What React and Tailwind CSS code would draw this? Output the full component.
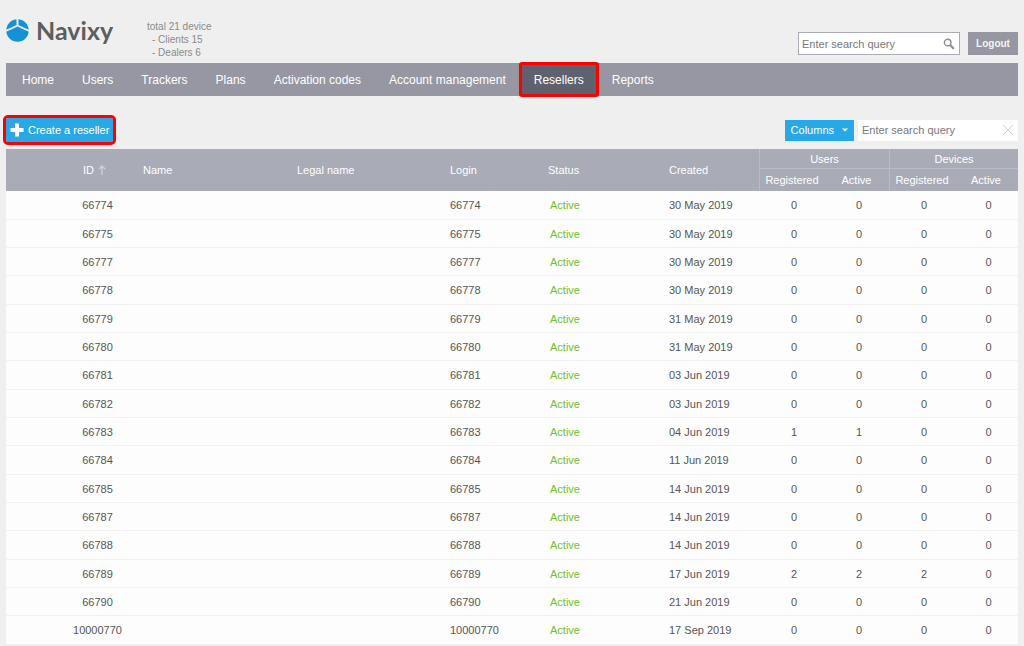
import React, { useState } from 'react';

const NAV = [
  'Home',
  'Users',
  'Trackers',
  'Plans',
  'Activation codes',
  'Account management',
  'Resellers',
  'Reports',
];

const RESELLERS = [
  { id: '66774', created: '30 May 2019', counts: [0, 0, 0, 0] },
  { id: '66775', created: '30 May 2019', counts: [0, 0, 0, 0] },
  { id: '66777', created: '30 May 2019', counts: [0, 0, 0, 0] },
  { id: '66778', created: '30 May 2019', counts: [0, 0, 0, 0] },
  { id: '66779', created: '31 May 2019', counts: [0, 0, 0, 0] },
  { id: '66780', created: '31 May 2019', counts: [0, 0, 0, 0] },
  { id: '66781', created: '03 Jun 2019', counts: [0, 0, 0, 0] },
  { id: '66782', created: '03 Jun 2019', counts: [0, 0, 0, 0] },
  { id: '66783', created: '04 Jun 2019', counts: [1, 1, 0, 0] },
  { id: '66784', created: '11 Jun 2019', counts: [0, 0, 0, 0] },
  { id: '66785', created: '14 Jun 2019', counts: [0, 0, 0, 0] },
  { id: '66787', created: '14 Jun 2019', counts: [0, 0, 0, 0] },
  { id: '66788', created: '14 Jun 2019', counts: [0, 0, 0, 0] },
  { id: '66789', created: '17 Jun 2019', counts: [2, 2, 2, 0] },
  { id: '66790', created: '21 Jun 2019', counts: [0, 0, 0, 0] },
  { id: '10000770', created: '17 Sep 2019', counts: [0, 0, 0, 0] },
];

function Logo() {
  return (
    <a href="#home" className="flex items-center gap-[7px] h-7 text-[#5e5e5e]">
      <svg viewBox="0 0 24 24" className="size-[23px]" aria-hidden="true">
        <circle cx="12" cy="12" r="11.7" fill="#1592d3" />
        <path d="M12 0V7M-1 12.5Q4 11 12 6.8Q20 11 25 12.5" fill="none" stroke="#efefef" strokeWidth="2" />
      </svg>
      <span className="font-['Lato',sans-serif] font-bold text-[25px] leading-7">Navixy</span>
    </a>
  );
}

function Header() {
  return (
    <header className="flex items-start h-[63px]">
      <div className="pt-4 w-[141px] shrink-0">
        <Logo />
      </div>
      <div className="pt-5 text-[10px] leading-[13px] text-[#8b8b8b]">
        <p>total 21 device</p>
        <p className="pl-[5px]">- Clients 15</p>
        <p className="pl-[5px]">- Dealers 6</p>
      </div>
      <div className="ml-auto flex gap-2 pt-8">
        <form className="flex items-center w-[162px] h-[23px] bg-white border border-[#a9abb7]">
          <input
            type="text"
            aria-label="Search"
            placeholder="Enter search query"
            className="flex-1 min-w-0 px-[3px] outline-none placeholder:text-[#777]"
          />
          <button type="button" aria-label="Search" className="px-1">
            <svg viewBox="0 0 12 12" className="size-3" fill="none" stroke="#8b8d99" aria-hidden="true">
              <circle cx="4.7" cy="4.5" r="3.3" strokeWidth="1.4" />
              <path d="M7 7L10.8 10.8" strokeWidth="2.2" />
            </svg>
          </button>
        </form>
        <button type="button" className="h-[23px] w-[50px] bg-[#9697a2] text-[10px] font-bold text-[#f4f4f6]">
          Logout
        </button>
      </div>
    </header>
  );
}

function NavBar() {
  return (
    <nav className="flex h-[33px] pl-[2px] bg-[#9697a2] text-white text-[12px]">
      {NAV.map((item) => (
        <a
          key={item}
          href="#"
          className={
            item === 'Resellers'
              ? 'flex items-center px-[14px] bg-[#5f616e] rounded-xs outline-3 -outline-offset-2 outline-[#fe0000]'
              : 'flex items-center px-[14px]'
          }
        >
          {item}
        </a>
      ))}
    </nav>
  );
}

function Toolbar() {
  return (
    <div className="flex items-center h-[53px] pt-5 pb-[5px]">
      <button
        type="button"
        className="flex items-center gap-1 h-6 w-[107px] pl-1 bg-[#28a9e6] text-white rounded-xs outline-3 outline-[#fe0000]"
      >
        <svg viewBox="0 0 14 14" className="size-[14px]" aria-hidden="true">
          <path d="M7 0.5V13.5M0.5 7H13.5" stroke="#fff" strokeWidth="4" />
        </svg>
        Create a reseller
      </button>
      <div className="ml-auto flex gap-1">
        <button type="button" className="flex items-center gap-2 h-[21px] px-[6px] bg-[#28a9e6] text-white">
          Columns
          <svg viewBox="0 0 6 4" className="w-[6px] h-1" aria-hidden="true">
            <path d="M0 0.5H6L3 3.5Z" fill="#fff" />
          </svg>
        </button>
        <div className="flex items-center w-[160px] h-[21px] bg-white">
          <input
            type="text"
            aria-label="Filter resellers"
            placeholder="Enter search query"
            className="flex-1 min-w-0 px-1 outline-none placeholder:text-[#777]"
          />
          <button type="button" aria-label="Clear" className="pr-1">
            <svg viewBox="0 0 12 12" className="size-3" aria-hidden="true">
              <path d="M1 1L11 11M11 1L1 11" stroke="#d2d2d2" fill="none" />
            </svg>
          </button>
        </div>
      </div>
    </div>
  );
}

function ResellersTable() {
  const [asc, setAsc] = useState(true);
  const rows = asc ? RESELLERS : [...RESELLERS].reverse();

  return (
    <table className="w-full table-fixed border-separate border-spacing-0">
      <colgroup>
        <col className="w-[48px]" />
        <col className="w-[81px]" />
        <col className="w-[154px]" />
        <col className="w-[153px]" />
        <col className="w-[98px]" />
        <col className="w-[121px]" />
        <col className="w-[98px]" />
        <col className="w-[65px]" />
        <col className="w-[65px]" />
        <col className="w-[65px]" />
        <col className="w-[64px]" />
      </colgroup>
      <thead className="bg-[#a9abb7] text-white [&_th]:font-normal [&_th]:p-0">
        <tr className="h-5 text-left">
          <td rowSpan={2}></td>
          <th rowSpan={2} scope="col" className="text-center">
            <button type="button" onClick={() => setAsc(!asc)} className="inline-flex items-center gap-1">
              ID
              <svg viewBox="0 0 8 10" className="w-2 h-[10px]" fill="none" stroke="#cfd0d6" aria-hidden="true">
                <path d="M4 10V1M1 4L4 1L7 4" strokeWidth="1.4" />
              </svg>
            </button>
          </th>
          <th rowSpan={2} scope="col"><span className="pl-2">Name</span></th>
          <th rowSpan={2} scope="col"><span className="pl-2">Legal name</span></th>
          <th rowSpan={2} scope="col"><span className="pl-2">Login</span></th>
          <th rowSpan={2} scope="col"><span className="pl-2">Status</span></th>
          <th rowSpan={2} scope="col"><span className="pl-2">Created</span></th>
          <th colSpan={2} scope="colgroup" className="text-center border-l border-b border-[#b9bbc5]">Users</th>
          <th colSpan={2} scope="colgroup" className="text-center border-l border-b border-[#b9bbc5]">Devices</th>
        </tr>
        <tr className="h-[22px]">
          <th scope="col" className="border-l border-[#b9bbc5]">Registered</th>
          <th scope="col">Active</th>
          <th scope="col" className="border-l border-[#b9bbc5]">Registered</th>
          <th scope="col">Active</th>
        </tr>
      </thead>
      <tbody className="bg-[#fdfdfd] [&_td]:border-b [&_td]:border-[#f2f2f2] [&_td]:py-0">
        {rows.map((r) => (
          <tr key={r.id} className="h-7 nth-[3n+1]:h-[29px]">
            <td></td>
            <td className="pl-[6px] pr-0 text-center">{r.id}</td>
            <td></td>
            <td></td>
            <td className="pl-2">{r.id}</td>
            <td className="pl-[10px] text-[#6cc22c]">Active</td>
            <td className="pl-2">{r.created}</td>
            {r.counts.map((n, i) => (
              <td key={i} className="pl-[5px] pr-0 text-center">{n}</td>
            ))}
          </tr>
        ))}
      </tbody>
    </table>
  );
}

export default function App() {
  return (
    <div className="min-h-screen bg-[#efefef] px-[6px] font-['Liberation_Sans',Arial,sans-serif] text-[11px] leading-4 text-[#555]">
      <Header />
      <NavBar />
      <main>
        <Toolbar />
        <ResellersTable />
      </main>
    </div>
  );
}
